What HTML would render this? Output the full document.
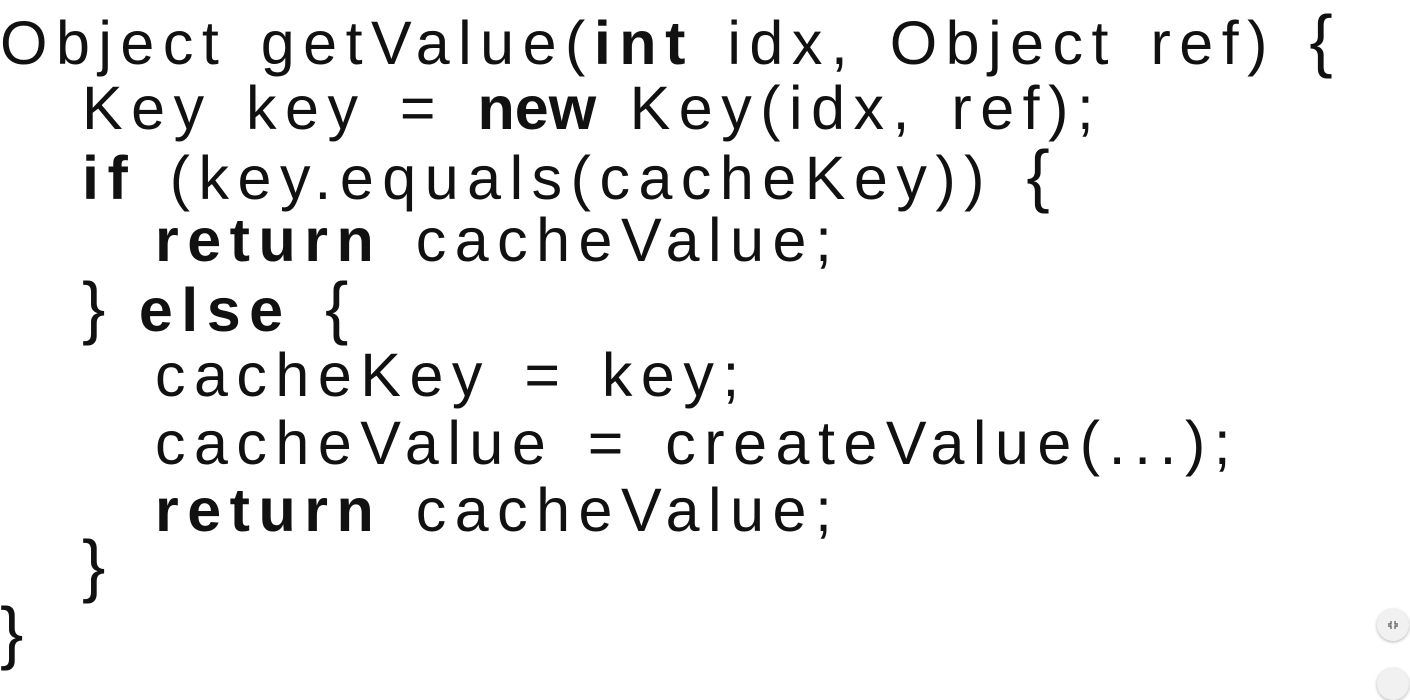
<!DOCTYPE html>
<html><head><style>
body{margin:0;width:1410px;height:679px;background:#fff;overflow:hidden;position:relative;font-family:"Liberation Sans",sans-serif;}
.l{position:absolute;font-size:61px;letter-spacing:8.5px;word-spacing:8px;white-space:pre;color:#111;line-height:70px;}
b{font-weight:bold;}
.c{position:absolute;width:32px;height:32px;border-radius:50%;background:#f1f1f1;box-shadow:0 1px 3px rgba(0,0,0,.3);}
.br{font-size:70px;letter-spacing:0;}
</style></head><body>
<div class="l" style="left:0;top:5px">Object getValue(<b>int</b> idx, Object ref) <span class="br">{</span></div>
<div class="l" style="left:82px;top:73px">Key key = <b style="letter-spacing:0">new</b> Key(idx, ref);</div>
<div class="l" style="left:82px;top:140px"><b>if</b> (key.equals(cacheKey)) <span class="br">{</span></div>
<div class="l" style="left:155px;top:205px"><b>return</b> cacheValue;</div>
<div class="l" style="left:82px;top:272px"><span class="br">}</span> <b>else</b> <span class="br">{</span></div>
<div class="l" style="left:155px;top:340px">cacheKey = key;</div>
<div class="l" style="left:155px;top:408px">cacheValue = createValue(...);</div>
<div class="l" style="left:155px;top:475px"><b>return</b> cacheValue;</div>
<div class="l" style="left:82px;top:530px"><span class="br">}</span></div>
<div class="l" style="left:0;top:597px"><span class="br">}</span></div>
<div class="c" style="left:1377px;top:609px"><svg width="32" height="32"><path d="M14 12v3h-3M18 12v3h3M14 20v-3h-3M18 20v-3h3" stroke="#555" stroke-width="1.2" fill="none"/></svg></div>
<div class="c" style="left:1377px;top:668px"></div>
</body></html>
